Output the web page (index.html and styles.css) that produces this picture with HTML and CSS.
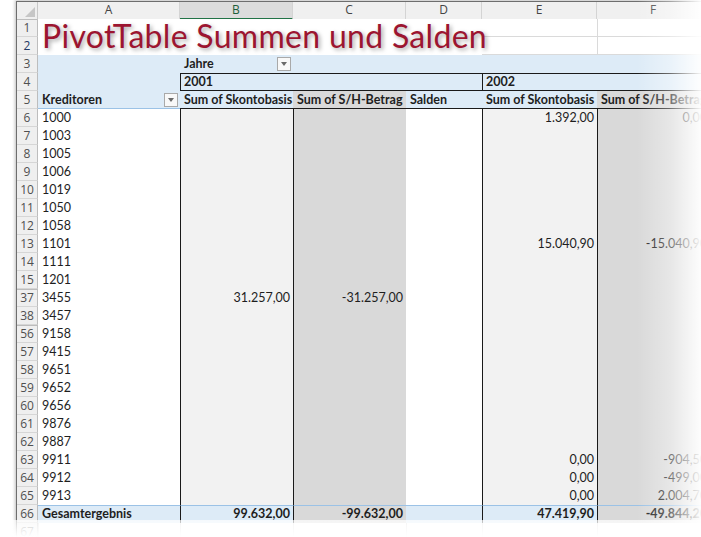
FILE: index.html
```html
<!DOCTYPE html>
<html>
<head>
<meta charset="utf-8">
<link rel="stylesheet" href="styles.css">
</head>
<body>
<div class="frame">
  <div class="row colhead">
    <div class="corner"><span class="tri"></span></div>
    <div class="ch">A</div>
    <div class="ch sel">B</div>
    <div class="ch">C</div>
    <div class="ch">D</div>
    <div class="ch">E</div>
    <div class="ch">F</div>
  </div>
  <div class="row tall">
    <div class="rh r1">1</div>
    <div class="rh r2">2</div>
    <div class="title"><span class="ttext">PivotTable Summen und Salden</span></div>
    <div class="grid e1"></div>
    <div class="grid f1"></div>
    <div class="grid e2"></div>
    <div class="grid f2"></div>
  </div>
  <div class="row">
    <div class="rh">3</div>
    <div class="cell blue"></div>
    <div class="cell blue split"><b>Jahre</b><span class="dd"></span></div>
    <div class="cell blue"></div>
    <div class="cell blue"></div>
    <div class="cell blue"></div>
    <div class="cell blue"></div>
  </div>
  <div class="row">
    <div class="rh">4</div>
    <div class="cell blue"></div>
    <div class="cell blue box span3"><b>2001</b></div>
    <div class="cell blue box span2"><b>2002</b></div>
  </div>
  <div class="row hdr">
    <div class="rh">5</div>
    <div class="cell blue split ca"><b>Kreditoren</b><span class="dd"></span></div>
    <div class="cell blue"><b>Sum of Skontobasis</b></div>
    <div class="cell grey"><b>Sum of S/H-Betrag</b></div>
    <div class="cell blue"><b>Salden</b></div>
    <div class="cell blue"><b>Sum of Skontobasis</b></div>
    <div class="cell grey"><b>Sum of S/H-Betrag</b></div>
  </div>

  <div class="row data"><div class="rh">6</div><div class="cell">1000</div><div class="cell lg bl"></div><div class="cell grey bl"></div><div class="cell"></div><div class="cell lg bl num">1.392,00</div><div class="cell grey bl num">0,00</div></div>
  <div class="row data"><div class="rh">7</div><div class="cell">1003</div><div class="cell lg bl"></div><div class="cell grey bl"></div><div class="cell"></div><div class="cell lg bl"></div><div class="cell grey bl"></div></div>
  <div class="row data"><div class="rh">8</div><div class="cell">1005</div><div class="cell lg bl"></div><div class="cell grey bl"></div><div class="cell"></div><div class="cell lg bl"></div><div class="cell grey bl"></div></div>
  <div class="row data"><div class="rh">9</div><div class="cell">1006</div><div class="cell lg bl"></div><div class="cell grey bl"></div><div class="cell"></div><div class="cell lg bl"></div><div class="cell grey bl"></div></div>
  <div class="row data"><div class="rh">10</div><div class="cell">1019</div><div class="cell lg bl"></div><div class="cell grey bl"></div><div class="cell"></div><div class="cell lg bl"></div><div class="cell grey bl"></div></div>
  <div class="row data"><div class="rh">11</div><div class="cell">1050</div><div class="cell lg bl"></div><div class="cell grey bl"></div><div class="cell"></div><div class="cell lg bl"></div><div class="cell grey bl"></div></div>
  <div class="row data"><div class="rh">12</div><div class="cell">1058</div><div class="cell lg bl"></div><div class="cell grey bl"></div><div class="cell"></div><div class="cell lg bl"></div><div class="cell grey bl"></div></div>
  <div class="row data"><div class="rh">13</div><div class="cell">1101</div><div class="cell lg bl"></div><div class="cell grey bl"></div><div class="cell"></div><div class="cell lg bl num">15.040,90</div><div class="cell grey bl num">-15.040,90</div></div>
  <div class="row data"><div class="rh">14</div><div class="cell">1111</div><div class="cell lg bl"></div><div class="cell grey bl"></div><div class="cell"></div><div class="cell lg bl"></div><div class="cell grey bl"></div></div>
  <div class="row data"><div class="rh">15</div><div class="cell">1201</div><div class="cell lg bl"></div><div class="cell grey bl"></div><div class="cell"></div><div class="cell lg bl"></div><div class="cell grey bl"></div></div>
  <div class="row data"><div class="rh hid">37</div><div class="cell">3455</div><div class="cell lg bl num">31.257,00</div><div class="cell grey bl num">-31.257,00</div><div class="cell"></div><div class="cell lg bl"></div><div class="cell grey bl"></div></div>
  <div class="row data"><div class="rh">38</div><div class="cell">3457</div><div class="cell lg bl"></div><div class="cell grey bl"></div><div class="cell"></div><div class="cell lg bl"></div><div class="cell grey bl"></div></div>
  <div class="row data"><div class="rh hid">56</div><div class="cell">9158</div><div class="cell lg bl"></div><div class="cell grey bl"></div><div class="cell"></div><div class="cell lg bl"></div><div class="cell grey bl"></div></div>
  <div class="row data"><div class="rh">57</div><div class="cell">9415</div><div class="cell lg bl"></div><div class="cell grey bl"></div><div class="cell"></div><div class="cell lg bl"></div><div class="cell grey bl"></div></div>
  <div class="row data"><div class="rh">58</div><div class="cell">9651</div><div class="cell lg bl"></div><div class="cell grey bl"></div><div class="cell"></div><div class="cell lg bl"></div><div class="cell grey bl"></div></div>
  <div class="row data"><div class="rh">59</div><div class="cell">9652</div><div class="cell lg bl"></div><div class="cell grey bl"></div><div class="cell"></div><div class="cell lg bl"></div><div class="cell grey bl"></div></div>
  <div class="row data"><div class="rh">60</div><div class="cell">9656</div><div class="cell lg bl"></div><div class="cell grey bl"></div><div class="cell"></div><div class="cell lg bl"></div><div class="cell grey bl"></div></div>
  <div class="row data"><div class="rh">61</div><div class="cell">9876</div><div class="cell lg bl"></div><div class="cell grey bl"></div><div class="cell"></div><div class="cell lg bl"></div><div class="cell grey bl"></div></div>
  <div class="row data"><div class="rh">62</div><div class="cell">9887</div><div class="cell lg bl"></div><div class="cell grey bl"></div><div class="cell"></div><div class="cell lg bl"></div><div class="cell grey bl"></div></div>
  <div class="row data"><div class="rh">63</div><div class="cell">9911</div><div class="cell lg bl"></div><div class="cell grey bl"></div><div class="cell"></div><div class="cell lg bl num">0,00</div><div class="cell grey bl num">-904,50</div></div>
  <div class="row data"><div class="rh">64</div><div class="cell">9912</div><div class="cell lg bl"></div><div class="cell grey bl"></div><div class="cell"></div><div class="cell lg bl num">0,00</div><div class="cell grey bl num">-499,00</div></div>
  <div class="row data"><div class="rh">65</div><div class="cell">9913</div><div class="cell lg bl"></div><div class="cell grey bl"></div><div class="cell"></div><div class="cell lg bl num">0,00</div><div class="cell grey bl num">2.004,70</div></div>
  <div class="row total"><div class="rh">66</div><div class="cell blue"><b>Gesamtergebnis</b></div><div class="cell blue bl num"><b>99.632,00</b></div><div class="cell grey bl num"><b>-99.632,00</b></div><div class="cell blue"></div><div class="cell blue bl num"><b>47.419,90</b></div><div class="cell grey bl num"><b>-49.844,20</b></div></div>
  <div class="row empty"><div class="rh">67</div><div class="cell gl"></div><div class="cell gl"></div><div class="cell gl"></div><div class="cell gl"></div><div class="cell gl"></div><div class="cell gl"></div></div>
</div>
<div class="fade-r"></div>
<div class="fade-b"></div>
</body>
</html>
```
FILE: styles.css
```css
* { box-sizing: border-box; }
html, body { margin: 0; padding: 0; background: #fff; overflow: hidden; }
body {
  width: 701px; height: 537px; position: relative;
  font-family: Lato, "Liberation Sans", sans-serif;
  font-size: 12.5px; color: #1e1e1e;
}
.frame {
  margin: 1px 0 0 16px;
  width: 700px; height: 560px;
  border-left: 1px solid #6e6e6e;
  border-top: 1px solid #6e6e6e;
  box-shadow: -1px -1px 3px rgba(0,0,0,0.25);
  overflow: hidden;
}
.row {
  display: grid;
  grid-template-columns: 21px 142px 113px 113px 76px 115px 113px;
  height: 18px;
  width: 693px;
}
.colhead { height: 17px; }
.corner {
  background: #efefef; border-right: 1px solid #c8c8c8; border-bottom: 1px solid #bdbdbd;
  position: relative;
}
.tri {
  position: absolute; right: 2px; bottom: 2px; width: 0; height: 0;
  border-left: 10px solid transparent; border-bottom: 10px solid #c6c6c6;
}
.ch {
  background: #f0f0f0; border-right: 1px solid #d4d4d4; border-bottom: 1px solid #bdbdbd;
  text-align: center; font-size: 12px; line-height: 16px; color: #444;
  font-family: "Open Sans", "Liberation Sans", sans-serif;
}
.ch.sel { background: #dcdcdc; color: #1e5e3a; border-bottom: 2px solid #217346; }

.rh {
  background: #efefef; border-right: 1px solid #bdbdbd; border-bottom: 1px solid #d6d6d6;
  text-align: center; font-size: 12px; line-height: 17px; color: #505050;
  font-family: "Open Sans", "Liberation Sans", sans-serif;
}
.rh.hid { border-top: 1px solid #bcbcbc; line-height: 16px; }

.tall { height: 36px; grid-template-rows: 18px 18px; }
.r1 { grid-column: 1; grid-row: 1; }
.r2 { grid-column: 1; grid-row: 2; color: #1f3864; }
.title {
  grid-column: 2 / span 4; grid-row: 1 / span 2;
  background: #fff; position: relative; z-index: 1;
  padding-left: 4px; white-space: nowrap;
}
.ttext {
  display: block;
  font-family: Lato, "Open Sans", sans-serif;
  font-size: 32px; line-height: 34px; color: #9c1530;
  letter-spacing: 0.3px;
  text-shadow: 2px 2px 4px rgba(0,0,0,0.35);
}
.grid { background: #fff; border-bottom: 1px solid #dadada; border-left: 1px solid #dadada; }
.e1 { grid-column: 6; grid-row: 1; border-left: 0; }
.f1 { grid-column: 7; grid-row: 1; }
.e2 { grid-column: 6; grid-row: 2; border-left: 0; }
.f2 { grid-column: 7; grid-row: 2; }

.cell {
  display: flex; align-items: flex-end;
  padding: 0 3px 1px 4px; line-height: 16px;
  white-space: nowrap; overflow: hidden;
  background: #fff;
}
.cell b { font-weight: 700; }
.blue { background: #ddebf7; }
.grey { background: #d9d9d9; }
.lg { background: #f2f2f2; }
.bl { border-left: 1px solid #1a1a1a; }
.num { justify-content: flex-end; }
.split { justify-content: space-between; padding-right: 2px; align-items: center; }
.span3 { grid-column: span 3; }
.span2 { grid-column: span 2; }
.box { border: 1px solid #1a1a1a; border-right: 0; padding-bottom: 0; padding-left: 3px; }

.dd {
  width: 14px; height: 14px; flex: none;
  border: 1px solid #a9a9a9; background: #f8f8f8;
  position: relative;
}
.dd::after {
  content: ""; position: absolute; left: 3px; top: 4px;
  border-left: 3px solid transparent; border-right: 3px solid transparent;
  border-top: 4px solid #6a6a6a;
}
.hdr .cell { border-bottom: 1px solid #1a1a1a; padding-bottom: 0; }
.hdr .ca { border-bottom: 1px solid #9bc2e6; padding-left: 4px; }

.total .cell { border-top: 1px solid #9bc2e6; }
.empty .cell { background: #fff; }
.gl { border-left: 1px solid #dadada; }

.fade-r {
  position: absolute; top: 0; right: 0; width: 64px; height: 537px;
  background: linear-gradient(to right, rgba(255,255,255,0) 0%, rgba(255,255,255,0.35) 50%, rgba(255,255,255,0.95) 100%);
}
.fade-b {
  position: absolute; left: 0; bottom: 0; width: 701px; height: 17px;
  background: linear-gradient(to bottom, rgba(255,255,255,0.7) 0%, #fff 100%);
}
```
